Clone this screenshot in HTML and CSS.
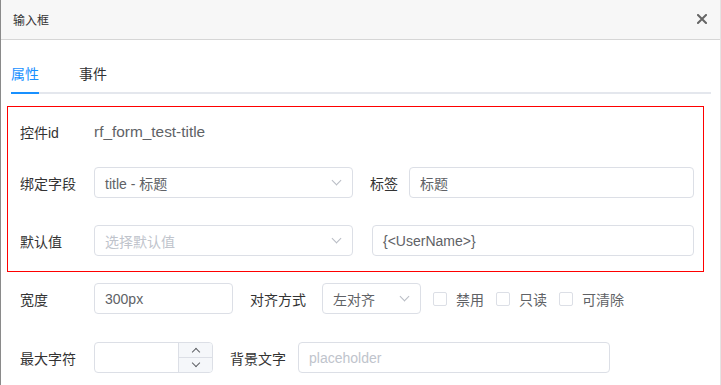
FILE: index.html
```html
<!DOCTYPE html>
<html>
<head>
<meta charset="utf-8">
<link rel="stylesheet" href="styles.css">
</head>
<body>
<div class="dialog">
  <div class="header">
    <span class="title">输入框</span>
    <svg class="close" width="10" height="10" viewBox="0 0 10 10"><path d="M1 1L9 9M9 1L1 9" stroke="#666" stroke-width="2" stroke-linecap="square"/></svg>
  </div>
  <div class="body">
    <div class="tabs">
      <div class="tab active">属性</div>
      <div class="tab">事件</div>
    </div>
    <div class="box">
      <div class="row r1">
        <div class="label">控件id</div>
        <div class="text">rf_form_test-title</div>
      </div>
      <div class="row r2">
        <div class="label">绑定字段</div>
        <div class="field select w259"><span class="val">title - 标题</span><span class="chev"></span></div>
        <div class="label2">标签</div>
        <div class="field grow"><span class="val">标题</span></div>
      </div>
      <div class="row r3">
        <div class="label">默认值</div>
        <div class="field select w259"><span class="ph">选择默认值</span><span class="chev"></span></div>
        <div class="field grow ml18"><span class="val">{&lt;UserName&gt;}</span></div>
      </div>
    </div>
    <div class="row r4">
      <div class="label">宽度</div>
      <div class="field w139"><span class="val">300px</span></div>
      <div class="label3">对齐方式</div>
      <div class="field select w99"><span class="val">左对齐</span><span class="chev"></span></div>
      <label class="check c1"><span class="cb"></span>禁用</label>
      <label class="check"><span class="cb"></span>只读</label>
      <label class="check"><span class="cb"></span>可清除</label>
    </div>
    <div class="row r5">
      <div class="label">最大字符</div>
      <div class="field num w119"><span class="numin"></span><span class="spin"><span class="up"></span><span class="down"></span></span></div>
      <div class="label4">背景文字</div>
      <div class="field w312"><span class="ph">placeholder</span></div>
    </div>
  </div>
</div>
</body>
</html>
```
FILE: styles.css
```css
html, body {
  margin: 0;
  padding: 0;
  background: #fff;
}
body {
  width: 721px;
  height: 385px;
  overflow: hidden;
  font-family: "Liberation Sans", "Noto Sans CJK SC", sans-serif;
  font-size: 14px;
  color: #333;
}
.dialog {
  height: 385px;
  border-left: 1px solid #8a8a8a;
  border-right: 1px solid #e4e4e4;
  box-sizing: border-box;
}
.header {
  height: 39px;
  background: #f7f7f7;
  border-bottom: 1px solid #d6d6d6;
  display: flex;
  align-items: center;
  justify-content: space-between;
  padding: 0 13px 0 12px;
}
.title {
  font-size: 12px;
  color: #333;
}
.close {
  display: block;
  margin-top: -2px;
}
.body {
  padding: 0 0 0 6px;
}
.tabs {
  margin: 20px 9px 0 4px;
  height: 32px;
  display: flex;
  border-bottom: 2px solid #e4e7ed;
  box-sizing: content-box;
}
.tab {
  height: 32px;
  line-height: 28px;
  margin-right: 40px;
  position: relative;
  color: #303133;
}
.tab.active {
  color: #1890ff;
}
.tab.active::after {
  content: "";
  position: absolute;
  left: 0;
  right: 0;
  bottom: -2px;
  height: 2px;
  background: #1890ff;
}
.box {
  margin-top: 12px;
  width: 697px;
  box-sizing: border-box;
  border: 1px solid #f00;
  padding: 9px 9px 15px 12px;
}
.row {
  display: flex;
  align-items: center;
  height: 31px;
}
.r2 { margin-top: 20px; }
.r3 { margin-top: 27px; }
.r4 { margin-top: 11px; padding-left: 13px; }
.r5 { margin-top: 28px; padding-left: 13px; }
.label {
  width: 74px;
  flex: none;
  color: #333;
}
.text {
  color: #606266;
  font-size: 15.4px;
}
.label2 {
  width: 39px;
  margin-left: 17px;
  flex: none;
}
.label3 {
  width: 72px;
  margin-left: 17px;
  flex: none;
}
.label4 {
  width: 68px;
  margin-left: 17px;
  flex: none;
}
.field {
  height: 31px;
  box-sizing: border-box;
  border: 1px solid #dcdfe6;
  border-radius: 4px;
  display: flex;
  align-items: center;
  padding: 0 10px;
  position: relative;
  background: #fff;
}
.val { color: #606266; }
.ph { color: #c0c4cc; }
.w259 { width: 259px; }
.w139 { width: 139px; }
.w99 { width: 99px; }
.w119 { width: 119px; }
.w312 { width: 312px; }
.grow { flex: 1; }
.ml18 { margin-left: 19px; }
.select { justify-content: space-between; }
.chev {
  width: 6px;
  height: 6px;
  border-right: 1px solid #b8bcc4;
  border-bottom: 1px solid #b8bcc4;
  transform: rotate(45deg);
  margin: -4px 2px 0 0;
}
.check {
  display: flex;
  align-items: center;
  margin-left: 12px;
  color: #606266;
}
.check.c1 { margin-left: 12px; }
.cb {
  width: 14px;
  height: 14px;
  box-sizing: border-box;
  border: 1px solid #dcdfe6;
  border-radius: 2px;
  margin-right: 9px;
  background: #fff;
}
.num {
  padding: 0;
  overflow: hidden;
}
.numin { flex: 1; }
.spin {
  width: 33px;
  height: 100%;
  border-left: 1px solid #dcdfe6;
  background: #f5f7fa;
  display: flex;
  flex-direction: column;
}
.up, .down {
  flex: 1;
  display: flex;
  align-items: center;
  justify-content: center;
}
.up { border-bottom: 1px solid #dcdfe6; }
.up::after, .down::after {
  content: "";
  width: 5px;
  height: 5px;
  border-left: 1px solid #606266;
  border-top: 1px solid #606266;
}
.up::after { transform: rotate(45deg); margin-top: 4px; }
.down::after { transform: rotate(225deg); margin-top: -4px; }
```
